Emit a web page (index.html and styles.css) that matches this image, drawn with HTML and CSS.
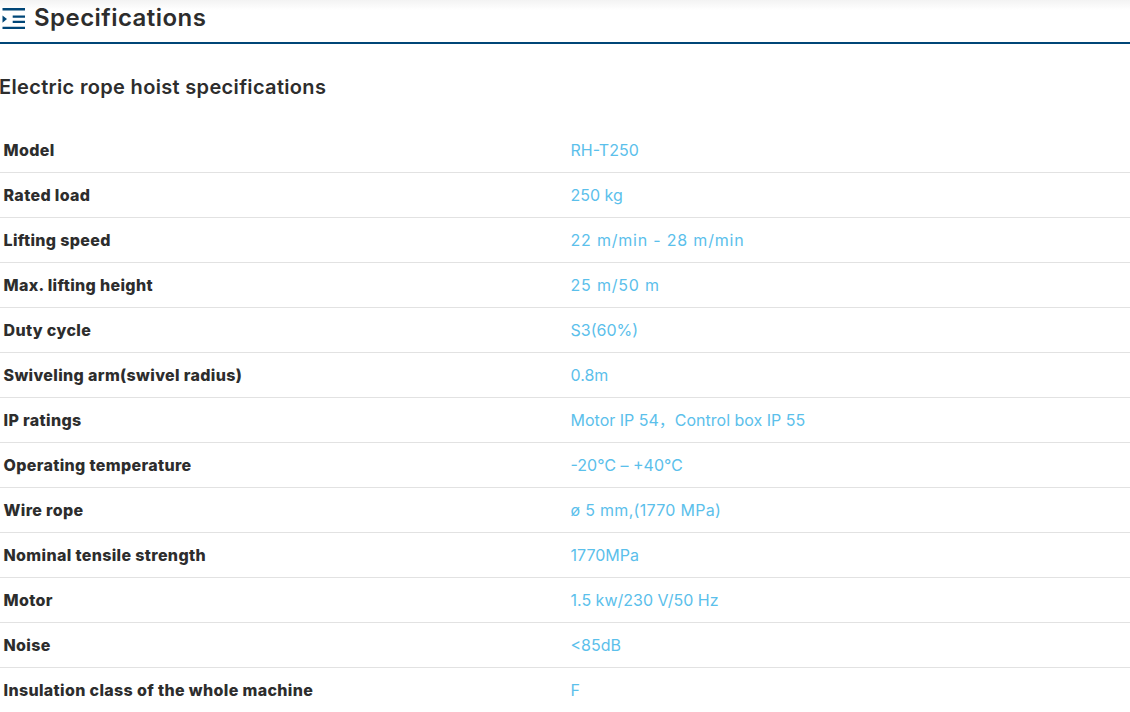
FILE: index.html
```html
<!DOCTYPE html>
<html lang="en">
<head>
<meta charset="utf-8">
<title>Specifications</title>
<link rel="stylesheet" href="styles.css">
</head>
<body>
<header class="section-head">
  <svg class="head-icon" width="26" height="26" viewBox="0 0 26 26" aria-hidden="true">
    <path class="bar" d="M2.500 0H25V2.400H2.500zM12.700 7.500H25V9.700H12.700zM12.700 12.800H25V15H12.700zM2.500 18.700H25V21.100H2.500z"/>
    <path class="bar" d="M2.500 7.500L7 11.100L2.500 14.700z"/>
  </svg>
  <h2 class="head-title">Specifications</h2>
</header>
<h3 class="sub-title">Electric rope hoist specifications</h3>
<table class="spec-table">
  <tbody>
    <tr><th>Model</th><td>RH-T250</td></tr>
    <tr><th>Rated load</th><td>250 kg</td></tr>
    <tr><th>Lifting speed</th><td class="wide">22 m/min - 28 m/min</td></tr>
    <tr><th>Max. lifting height</th><td class="wide">25 m/50 m</td></tr>
    <tr><th>Duty cycle</th><td>S3(60%)</td></tr>
    <tr><th>Swiveling arm(swivel radius)</th><td>0.8m</td></tr>
    <tr><th>IP ratings</th><td>Motor IP 54，Control box IP 55</td></tr>
    <tr><th>Operating temperature</th><td>-20℃ – +40℃</td></tr>
    <tr><th>Wire rope</th><td class="mid">ø 5 mm,(1770 MPa)</td></tr>
    <tr><th>Nominal tensile strength</th><td>1770MPa</td></tr>
    <tr><th>Motor</th><td>1.5 kw/230 V/50 Hz</td></tr>
    <tr><th>Noise</th><td>&lt;85dB</td></tr>
    <tr><th>Insulation class of the whole machine</th><td>F</td></tr>
  </tbody>
</table>
</body>
</html>
```
FILE: styles.css
```css
html, body {
  margin: 0;
  padding: 0;
  height: 712px;
  overflow: hidden;
  background: #fff;
  font-family: Inter, "Noto Sans", "Noto Sans CJK SC", sans-serif;
  color: #2d2d2d;
}
body {
  background: linear-gradient(#f3f3f3, #fff 10px);
}
.section-head {
  display: flex;
  align-items: center;
  gap: 8px;
  height: 42px;
  border-bottom: 2px solid #004677;
}
.head-icon { flex: none; }
.bar { fill: #004677; }
.head-title {
  margin: 0 0 6px;
  font-size: 24px;
  line-height: 32px;
  font-weight: 600;
  letter-spacing: 0.45px;
}
.sub-title {
  margin: 0 0 0 -1px;
  padding-top: 29px;
  height: 55px;
  font-size: 20px;
  line-height: 28px;
  font-weight: 600;
  letter-spacing: 0.33px;
}
.spec-table {
  width: 100%;
  border-collapse: collapse;
  table-layout: fixed;
}
.spec-table tr { height: 45px; border-bottom: 1px solid #e2e2e2; }
.spec-table tr:first-child { height: 44px; }
.spec-table tr:last-child { border-bottom: 0; }
.spec-table th, .spec-table td {
  padding: 0 0 0 3.500px;
  text-align: left;
  font-size: 16px;
  line-height: 24px;
}
.spec-table th {
  width: 50%;
  font-weight: 800;
  letter-spacing: 0.35px;
  color: #2d2d2d;
}
.spec-table td {
  padding-left: 2px;
  font-weight: 400;
  color: #5bc0eb;
}
.spec-table td.wide { letter-spacing: 0.8px; }
.spec-table td.mid { letter-spacing: 0.3px; }
```
